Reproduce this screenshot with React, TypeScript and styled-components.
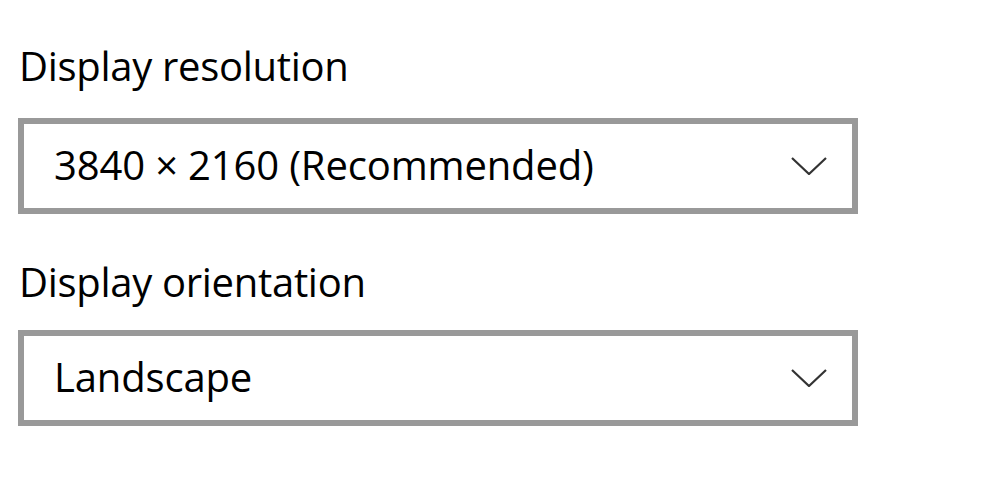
import React from "react";
import styled, { createGlobalStyle } from "styled-components";

const GlobalStyle = createGlobalStyle`
  html, body {
    margin: 0;
    padding: 0;
    background: #ffffff;
  }
  body {
    font-family: "Open Sans", "Noto Sans", sans-serif;
    color: #000000;
  }
`;

const Page = styled.div`
  width: 985px;
  height: 502px;
  padding: 39px 0 0 18px;
  box-sizing: border-box;
  display: flex;
  flex-direction: column;
`;

const Field = styled.div<{ $gapTop: number; $gapLabel: number }>`
  display: flex;
  flex-direction: column;
  margin-top: ${(p) => p.$gapTop}px;
  gap: ${(p) => p.$gapLabel}px;
`;

const Label = styled.div`
  font-size: 40px;
  line-height: 54px;
  letter-spacing: -0.3px;
  padding-left: 1px;
`;

const Select = styled.div`
  width: 840px;
  height: 96px;
  box-sizing: border-box;
  border: 6px solid #999999;
  display: flex;
  align-items: center;
  justify-content: space-between;
  padding: 0 25px 0 30px;
`;

const Value = styled.span`
  font-size: 40px;
  letter-spacing: -0.15px;
  line-height: 40px;
  margin-bottom: 3px;
`;

const Chevron = () => (
  <svg width="36" height="18" viewBox="0 0 36 18" fill="none">
    <path d="M1 1 L18 17 L35 1" stroke="#333333" strokeWidth="2.2" />
  </svg>
);

const fields = [
  { label: "Display resolution", value: "3840 × 2160 (Recommended)", top: 0, gap: 25 },
  { label: "Display orientation", value: "Landscape", top: 41, gap: 21 },
];

export default function App() {
  return (
    <>
      <GlobalStyle />
      <Page>
        {fields.map((f) => (
          <Field key={f.label} $gapTop={f.top} $gapLabel={f.gap}>
            <Label>{f.label}</Label>
            <Select>
              <Value>{f.value}</Value>
              <Chevron />
            </Select>
          </Field>
        ))}
      </Page>
    </>
  );
}
